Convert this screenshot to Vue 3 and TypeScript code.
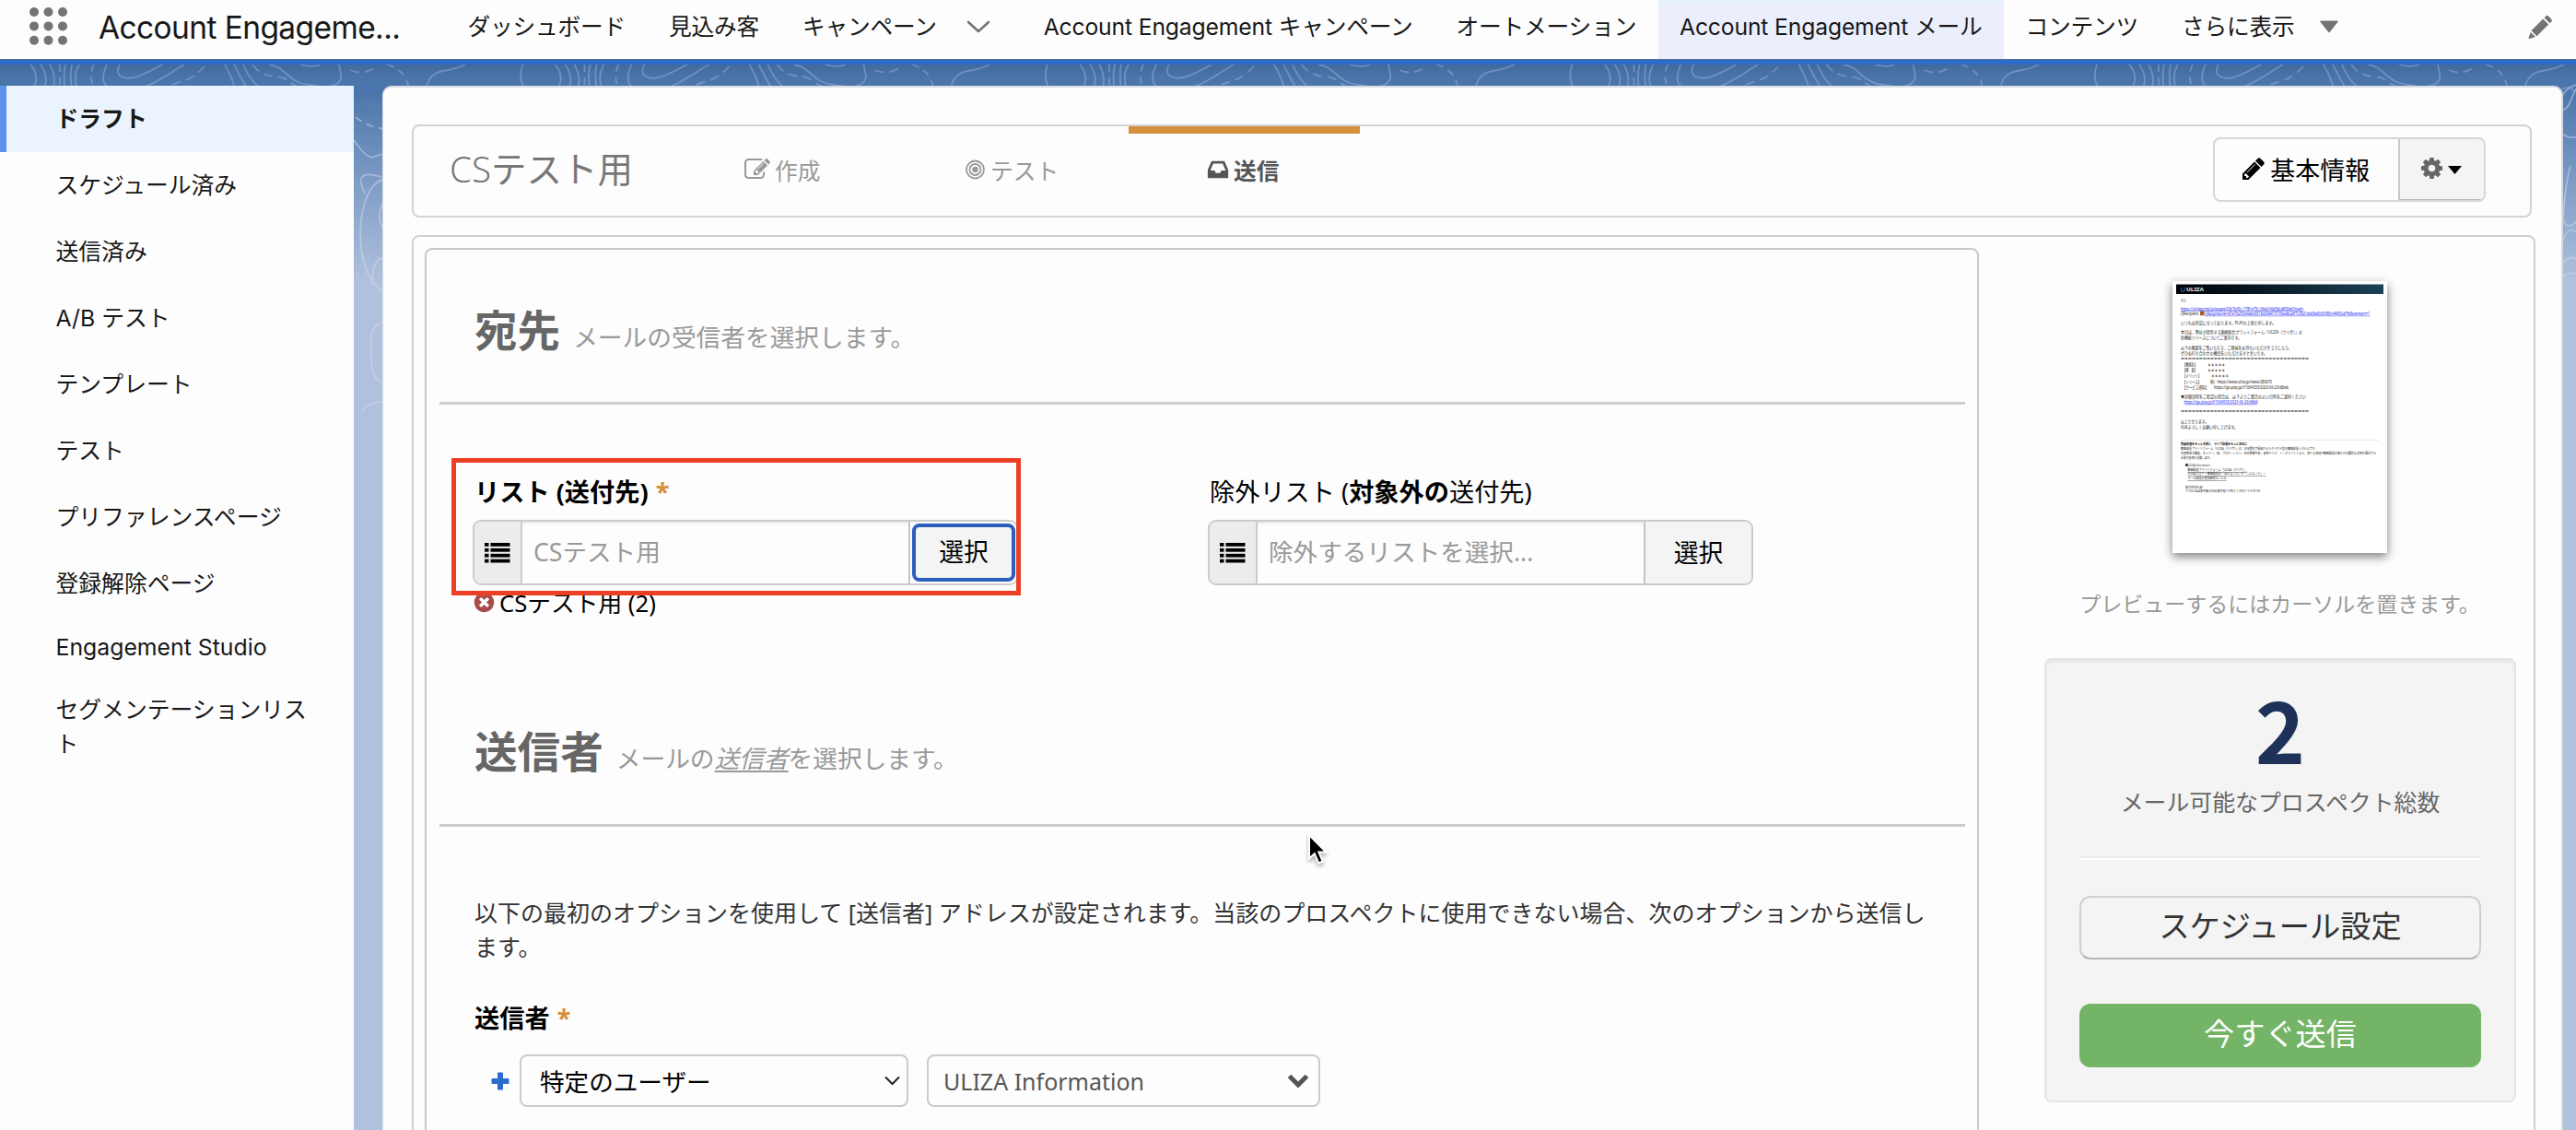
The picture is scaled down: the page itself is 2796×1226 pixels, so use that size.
<script setup lang="ts">
interface NavItem { label: string; active?: boolean; chevron?: boolean; more?: boolean }
interface MailLine { x: number; y: number; w: number; s: number; t: string; c?: string; b?: boolean; u?: boolean }

const navItems: NavItem[] = [
  { label: 'ダッシュボード' },
  { label: '見込み客' },
  { label: 'キャンペーン', chevron: true },
  { label: 'Account Engagement キャンペーン' },
  { label: 'オートメーション' },
  { label: 'Account Engagement メール', active: true },
  { label: 'コンテンツ' },
  { label: 'さらに表示', more: true },
]

const sideItems: string[] = [
  'ドラフト', 'スケジュール済み', '送信済み', 'A/B テスト', 'テンプレート', 'テスト',
  'プリファレンスページ', '登録解除ページ', 'Engagement Studio', 'セグメンテーションリスト',
]

const icons = {
  pencil: 'M491 1536l91-91-235-235-91 91v107h128v128h107zm523-928q0-22-22-22-10 0-17 7l-542 542q-7 7-7 17 0 22 22 22 10 0 17-7l542-542q7-7 7-17zm-54-192l416 416-832 832h-416v-416zm683 96q0 53-37 90l-166 166-416-416 166-165q36-38 90-38 53 0 91 38l235 234q37 39 37 91z',
  edit: 'M888 1184l116-116-152-152-116 116v56h96v96h56zm440-720q-16-16-33 1l-350 350q-17 17-1 33t33-1l350-350q17-17 1-33zm80 594v190q0 119-84.5 203.5t-203.5 84.5h-832q-119 0-203.5-84.5t-84.5-203.5v-832q0-119 84.5-203.5t203.5-84.5h832q63 0 117 25 15 7 18 23 3 17-9 29l-49 49q-14 14-32 8-23-6-45-6h-832q-66 0-113 47t-47 113v832q0 66 47 113t113 47h832q66 0 113-47t47-113v-126q0-13 9-22l64-64q15-15 35-7t20 29zm-96-738l288 288-672 672h-288v-288zm444 132l-92 92-288-288 92-92q28-28 68-28t68 28l152 152q28 28 28 68t-28 68z',
  inbox: 'M1151 960h316q-1-3-2.5-8t-2.5-8l-212-496h-708l-212 496q-1 2-2.5 8t-2.5 8h316l95 192h320zm513 30v482q0 26-19 45t-45 19h-1408q-26 0-45-19t-19-45v-482q0-62 25-123l238-552q10-25 36.5-42t52.5-17h832q26 0 52.5 17t36.5 42l238 552q25 61 25 123z',
  cog: 'M1152 896q0-106-75-181t-181-75-181 75-75 181 75 181 181 75 181-75 75-181zm512-109v222q0 12-8 23t-20 13l-185 28q-19 54-39 91 35 50 107 138 10 12 10 25t-9 23q-27 37-99 108t-94 71q-12 0-26-9l-138-108q-44 23-91 38-16 136-29 186-7 28-36 28h-222q-14 0-24.5-8.5t-11.5-21.5l-28-184q-49-16-90-37l-141 107q-10 9-25 9-14 0-25-11-126-114-165-168-7-10-7-23 0-12 8-23 15-21 51-66.5t54-70.5q-27-50-41-99l-183-27q-13-2-21-12.5t-8-23.5v-222q0-12 8-23t19-13l186-28q14-46 39-92-40-57-107-138-10-12-10-24 0-10 9-23 26-36 98.5-107.5t94.5-71.5q13 0 26 10l138 107q44-23 91-38 16-136 29-186 7-28 36-28h222q14 0 24.5 8.5t11.5 21.5l28 184q49 16 90 37l142-107q9-9 24-9 13 0 25 10 129 119 165 170 7 8 7 22 0 12-8 23-15 21-51 66.5t-54 70.5q26 50 41 98l183 28q13 2 21 12.5t8 23.5z',
  remove: 'M1277 1122q0-26-19-45l-181-181 181-181q19-19 19-45 0-27-19-46l-90-90q-19-19-46-19-26 0-45 19l-181 181-181-181q-19-19-45-19-27 0-46 19l-90 90q-19 19-19 46 0 26 19 45l181 181-181 181q-19 19-19 45 0 27 19 46l90 90q19 19 46 19 26 0 45-19l181-181 181 181q19 19 45 19 27 0 46-19l90-90q19-19 19-46zm387-226q0 209-103 385.5t-279.5 279.5-385.5 103-385.5-103-279.5-279.5-103-385.5 103-385.5 279.5-279.5 385.5-103 385.5 103 279.5 279.5 103 385.5z',
}

const link = '#2020ee'
const mail: MailLine[] = [
  { x: 9, y: 23, w: 6, s: 4, t: '各位', c: '#777' },
  { x: 9, y: 31.5, w: 133, s: 4.4, t: 'https://ulizaportal.jp/pages/00b7b65c-178f-e75c-36a9-06d5dcd838e6?mail=', c: link, u: true },
  { x: 9, y: 36.7, w: 20, s: 4.4, t: '{{Recipient.', c: '#222' },
  { x: 35, y: 36.7, w: 179, s: 4.4, t: '}}&signature=d1e7b250b4dec831bb09e01510bedb2ef7c3821da09a8c83380c44852d7fd&version=1', c: link, u: true },
  { x: 9, y: 47, w: 103, s: 4.8, t: 'いつもお世話になっております。PLAYの上原と申します。' },
  { x: 9, y: 57.3, w: 132, s: 4.8, t: '本日は、弊社が提供する動画配信プラットフォーム「ULIZA（ウリザ）」の' },
  { x: 9, y: 63.3, w: 66, s: 4.8, t: '新機能リリースについてご案内です。' },
  { x: 9, y: 73.8, w: 121, s: 4.8, t: '以下の概要をご覧いただき、ご興味をお持ちいただけそうでしたら、' },
  { x: 9, y: 79.6, w: 94, s: 4.8, t: 'ぜひお打ち合わせの機会をいただけますと幸いです。' },
  { x: 9, y: 86, w: 139, s: 4.4, t: '===================================' },
  { x: 11, y: 92.3, w: 16, s: 4.8, t: '【機能名】' },
  { x: 38, y: 92.3, w: 19, s: 4.8, t: '＊＊＊＊＊' },
  { x: 11, y: 98, w: 16, s: 4.8, t: '【概　要】' },
  { x: 38, y: 98, w: 19, s: 4.8, t: '＊＊＊＊＊' },
  { x: 11, y: 103.7, w: 20, s: 4.8, t: '【メリット】' },
  { x: 42, y: 103.7, w: 19, s: 4.8, t: '＊＊＊＊＊' },
  { x: 11, y: 110.7, w: 20, s: 4.8, t: '【リリース】' },
  { x: 41, y: 110.7, w: 67, s: 4.8, t: '例）https://www.uliza.jp/news/280670' },
  { x: 11, y: 116.5, w: 28, s: 4.8, t: '【サービス資料】' },
  { x: 45, y: 116.5, w: 81, s: 4.6, t: 'https://go.play.jp/l/1064333/2023-06-23/d8wb' },
  { x: 9, y: 127, w: 136, s: 4.8, t: '▼詳細説明をご希望の場合は、以下よりご都合のよい日時をご選択ください' },
  { x: 12.5, y: 132.7, w: 80, s: 4.6, t: 'https://go.play.jp/l/1064333/2023-06-23/d8d4', c: link, u: true },
  { x: 9, y: 143, w: 139, s: 4.4, t: '===================================' },
  { x: 9, y: 153.7, w: 30, s: 4.8, t: '以上となります。' },
  { x: 9, y: 159.5, w: 62, s: 4.8, t: '何卒よろしくお願い申し上げます。' },
  { x: 9, y: 178, w: 72, s: 3.9, t: '動画配信をもっと手軽に　ライブ配信をもっと身近に', b: true },
  { x: 9, y: 183, w: 148, s: 3.9, t: '動画配信プラットフォーム「ULIZA（ウリザ）」は、日本国内で開発されたクラウド型の動画配信システムです。' },
  { x: 9, y: 187.8, w: 212, s: 3.9, t: '学習塾株式講座、セミナー、株、プロモーション、社内情報共有、音楽ライブ、トークイベントなど、様々な用途や動画配信の導入や効果的な活用を検討する' },
  { x: 9, y: 192.6, w: 34, s: 3.9, t: '企業の皆様を支援します。' },
  { x: 14, y: 201.3, w: 27, s: 3.9, t: '■ULIZA Information' },
  { x: 16.5, y: 206, w: 64, s: 3.9, t: '動画配信プラットフォーム「ULIZA（ウリザ）」', u: true },
  { x: 16.5, y: 210, w: 85, s: 3.9, t: 'ULIZAブログ ー動画配信の「ほんなこと」や「こんなこと」ー', u: true },
  { x: 16.5, y: 215, w: 42, s: 3.9, t: 'メール配信の登録解除はこちら', u: true },
  { x: 14, y: 224.5, w: 19, s: 3.9, t: '株式会社PLAY' },
  { x: 14, y: 228.5, w: 81, s: 3.9, t: '〒150-0044東京都渋谷区道玄坂1丁目21-1 渋谷ソラスタ15F' },
]
</script>

<template>
  <div class="app">
    <header class="top">
      <svg class="waffle" width="42" height="42" viewBox="0 0 42 42">
        <template v-for="r in 3" :key="r">
          <circle v-for="c in 3" :key="c" :cx="5 + (c - 1) * 15.5" :cy="5 + (r - 1) * 15.4" r="5" fill="#747474" />
        </template>
      </svg>
      <div class="app-name">Account Engageme...</div>
      <nav class="nav">
        <div v-for="n in navItems" :key="n.label" class="nav-item" :class="{ active: n.active }">
          <span>{{ n.label }}</span>
          <svg v-if="n.chevron" class="chev" width="26" height="14" viewBox="0 0 26 14"><path d="M2 2l11 10L24 2" fill="none" stroke="#747474" stroke-width="2.6" stroke-linecap="round" stroke-linejoin="round" /></svg>
          <svg v-if="n.more" class="tri" width="20" height="14" viewBox="0 0 20 14"><path d="M1 .5h18a.8.8 0 0 1 .6 1.3L10.6 13a.8.8 0 0 1-1.2 0L.4 1.8A.8.8 0 0 1 1 .5z" fill="#747474" /></svg>
        </div>
      </nav>
      <svg class="top-pencil" width="27" height="27" viewBox="0 0 27 27" fill="#747474"><path d="M3.500 17.300L16.200 4.600l6 6L9.500 23.300zM17.600 3.200l1.700-1.700a2 2 0 0 1 2.800 0l3.200 3.200a2 2 0 0 1 0 2.800l-1.700 1.700zM2.800 19l5.200 5.100-6.500 1.900a.7.7 0 0 1-.9-.9z" /></svg>
    </header>

    <main class="stage">
      <svg class="contours" width="2796" height="420" viewBox="0 0 2796 420" fill="none">
        <g v-for="k in 5" :key="k" :transform="`translate(${(k - 1) * 569.5} 0)`" stroke="#a8c3e6" stroke-opacity=".4" stroke-width="1.8">
          <path d="M-2 0Q-8 16 2 29M33 0q12 14 1 29M44 0q10 14 3 29M54 0q8 14 3 29M71 0q-3 14 0 29M78 0q-3 14 1 29M86 0q-8 14-1 29" />
          <path d="M65 0v29M102 0q-8 15 3 29M420 0q22 6 24 29" stroke-dasharray="8 6" />
          <path d="M116 0c-10 22 0 28 20 28c24 0 40-14 64-28M130 0c-8 14 8 18 22 12q14-6 24-12M244 0q8 14 12 29M254 0q8 16 16 29M264 0q10 24 26 29M292 0c18 2 20 20 44 22c26 6 36-2 34-12l-2-10M326 0q14 4 22 0M461 29c4-14 8-20 20-22q14-2 24-7M500 29c6-5 16-6 14 0" />
          <path d="M172 29q14-8 26-11t24-16M274 0c6 8 12 12 26 13s14 10 30 13M380 6c14 6 22 0 30-4" stroke-dasharray="10 6" />
        </g>
        <g stroke="#d3d9f2" stroke-opacity=".5" stroke-width="1.8">
          <path d="M386 57q12 10 30 13" stroke-dasharray="8 6" />
          <path d="M384 82q15 22 22 18l10-3M416 125c-30 6-36 100 0 122M396 140c-10-20-2-24 18-18M416 150q-8 16 0 28M416 210c-8 0-12 10-12 30M416 280q-16 2-13 30v8q0 24 13 28M416 366q-16 0-24 10" />
          <path d="M2796 22q-14 4-20 22 6 10 12 0l8-18M2782 76q6 4 14 3M2790 110q-6 20-8 60 6 10 14 0M2782 190q6-16 14-8M2782 215q8-8 14-4M2782 230q8-6 14-2" />
        </g>
      </svg>

      <aside class="side">
        <div v-for="(s, i) in sideItems" :key="s" class="side-item" :class="{ current: i === 0, latin: i === 8 }">{{ s }}</div>
      </aside>

      <section class="panel">
        <div class="steps">
          <div class="mail-name">CS<span>テスト用</span></div>
          <div class="step s1"><svg width="28" height="28" viewBox="0 0 1792 1792" fill="currentColor"><path :d="icons.edit" /></svg>作成</div>
          <div class="step s2">
            <svg width="21" height="22" viewBox="0 0 21 22" fill="none" stroke="currentColor"><circle cx="10.500" cy="11" r="9.500" stroke-width="1.800" /><circle cx="10.500" cy="11" r="6" stroke-width="1.800" /><circle cx="10.500" cy="11" r="3.200" fill="currentColor" stroke="none" /></svg>テスト
          </div>
          <div class="step s3"><svg width="26" height="26" viewBox="0 0 1792 1792" fill="currentColor"><path :d="icons.inbox" /></svg>送信</div>
          <div class="tools">
            <div class="tool"><svg width="28" height="28" viewBox="0 0 1792 1792"><path :d="icons.pencil" /></svg>基本情報</div>
            <div class="tool gear">
              <svg width="27" height="27" viewBox="0 0 1792 1792" fill="#666"><path :d="icons.cog" /></svg>
              <svg class="caret" width="15" height="9" viewBox="0 0 15 9"><path d="M0 0h15L7.500 9z" /></svg>
            </div>
          </div>
        </div>

        <div class="board">
          <div class="form">
            <div class="sec-head"><h2>宛先</h2><p>メールの受信者を選択します。</p></div>
            <div class="lists">
              <div class="field">
                <div class="label bold">リスト (送付先) <i class="req">*</i></div>
                <div class="group">
                  <div class="addon"><svg width="28" height="22" viewBox="0 0 28 22"><g v-for="r in 4" :key="r"><rect x="0" :y="(r - 1) * 5.9" width="4.500" height="3.800" /><rect x="6.500" :y="(r - 1) * 5.9" width="21" height="3.800" /></g></svg></div>
                  <div class="input">CSテスト用</div>
                  <div class="pick focus"><span>選択</span></div>
                </div>
                <div class="tag"><svg width="25" height="25" viewBox="0 0 1792 1792" fill="#a94c4a"><path :d="icons.remove" /></svg>CSテスト用 (2)</div>
                <div class="mark"></div>
              </div>
              <div class="field">
                <div class="label">除外リスト (<b>対象外の</b>送付先)</div>
                <div class="group">
                  <div class="addon"><svg width="28" height="22" viewBox="0 0 28 22"><g v-for="r in 4" :key="r"><rect x="0" :y="(r - 1) * 5.9" width="4.500" height="3.800" /><rect x="6.500" :y="(r - 1) * 5.9" width="21" height="3.800" /></g></svg></div>
                  <div class="input">除外するリストを選択...</div>
                  <div class="pick"><span>選択</span></div>
                </div>
              </div>
            </div>

            <div class="sec-head second"><h2>送信者</h2><p>メールの<em>送信者</em>を選択します。</p></div>
            <div class="sender">
              <p class="desc">以下の最初のオプションを使用して [送信者] アドレスが設定されます。当該のプロスペクトに使用できない場合、次のオプションから送信し<br>ます。</p>
              <div class="label bold">送信者 <i class="req">*</i></div>
              <div class="row">
                <svg class="plus" width="20" height="20" viewBox="0 0 20 20"><path d="M7.500 1h5v6.500H19v5h-6.500V19h-5v-6.500H1v-5h6.500z" fill="#2b6bcb" stroke="#2b6bcb" stroke-linejoin="round" /></svg>
                <div class="select a">特定のユーザー<svg width="17" height="11" viewBox="0 0 17 11"><path d="M1 1.500l7.500 7.500L16 1.500" fill="none" stroke="#222" stroke-width="2" /></svg></div>
                <div class="select b">ULIZA Information<svg width="24" height="16" viewBox="0 0 24 16"><path d="M2.500 2.500L12 12l9.500-9.500" fill="none" stroke="#555" stroke-width="5" /></svg></div>
              </div>
            </div>

            <svg class="cursor" width="26" height="38" viewBox="0 0 26 38"><path d="M4 3v25.500l5.800-5.300 4.400 10.200 4.500-1.900-4.300-9.900h8z" stroke="#fff" stroke-width="2" /></svg>
          </div>

          <div class="rail">
            <svg class="thumb" width="233" height="295" viewBox="0 0 233 295" font-family="'Noto Sans','Noto Sans CJK JP',sans-serif">
              <defs>
                <linearGradient id="bar" x1="0" y1="0" x2="1" y2="0"><stop offset="0" stop-color="#020408" /><stop offset=".3" stop-color="#05121c" /><stop offset="1" stop-color="#1c4257" /></linearGradient>
              </defs>
              <rect width="233" height="295" fill="#fff" />
              <rect x="4" y="3.500" width="225" height="10.500" fill="url(#bar)" />
              <path d="M9.500 7v2.500a1.800 1.800 0 0 0 3.600 0V6.500" fill="none" stroke="#2a5a8c" stroke-width="1.200" />
              <text x="15" y="11" font-size="5" font-weight="700" fill="#e8eef2" textLength="19" lengthAdjust="spacingAndGlyphs">ULIZA</text>
              <rect x="30" y="32.700" width="4.500" height="4.500" fill="#a85a28" />
              <rect x="9" y="172" width="215" height=".7" fill="#ddd" />
              <text v-for="(m, i) in mail" :key="i" :x="m.x" :y="m.y" :font-size="m.s" :fill="m.c ?? '#222'" :font-weight="m.b ? 700 : 400" :text-decoration="m.u ? 'underline' : 'none'" :textLength="m.w" lengthAdjust="spacingAndGlyphs">{{ m.t }}</text>
            </svg>
            <p class="hint">プレビューするにはカーソルを置きます。</p>
            <div class="summary">
              <div class="count">2</div>
              <div class="count-label">メール可能なプロスペクト総数</div>
              <div class="rule"></div>
              <div class="btn">スケジュール設定</div>
              <div class="btn green">今すぐ送信</div>
            </div>
          </div>
        </div>
      </section>
    </main>
  </div>
</template>

<style>
body { margin: 0; overflow: hidden; }
</style>

<style scoped>
.app {
  width: 2796px;
  height: 1226px;
  overflow: hidden;
  font-family: "Noto Sans", "Noto Sans CJK JP", sans-serif;
  color: #000;
  white-space: nowrap;
}
.app * { box-sizing: border-box; }
p, h2 { margin: 0; }

.top {
  height: 70px;
  display: flex;
  background: linear-gradient(#fdfdfd 64px, #566f93 64px, #566f93 65px, #2b6ccb 65px);
  font-family: Inter, "Noto Sans CJK JP", sans-serif;
  color: #181818;
}
.waffle { margin: 8px 0 0 32px; }
.app-name { margin-left: 33px; width: 377px; font-size: 33.5px; line-height: 60px; letter-spacing: -.6px; }
.nav { display: flex; }
.nav-item { height: 64px; padding: 0 23.4px; font-size: 24.7px; letter-spacing: -.15px; line-height: 58px; display: flex; }
.nav-item.active { background: #ebeefb; box-shadow: inset 0 2px #e4f1fb; }
.chev { margin: 22px 11px 0 32px; }
.tri { margin: 22px 0 0 27px; }
.top-pencil { margin: 16px 25px 0 auto; }

.stage {
  position: relative;
  height: 1156px;
  display: flex;
  padding-top: 23px;
  background: linear-gradient(#42699e 0, #4a75aa 14px, #4b76ab 30px, #7f9dc6 130px, #b0c1dd 235px);
}
.contours { position: absolute; left: 0; top: 0; }
.side {
  position: relative;
  width: 384px;
  background: #fdfdfd;
  font-family: Inter, "Noto Sans CJK JP", sans-serif;
  font-size: 24.8px;
  color: #181818;
}
.side-item { padding: 17.5px 40px 17.5px 60.5px; line-height: 37px; white-space: normal; }
.side-item.current { background: #ebf4fe; font-weight: 600; box-shadow: inset 7px 0 #5b93ee; }
.side-item.latin { line-height: 30px; }

.panel {
  position: relative;
  margin-left: 31px;
  width: 2367px;
  padding: 40px 29px 0 31px;
  background: #fdfdfd;
  border-left: 1px solid #d5dae2;
  border-right: 2px solid #d5d8dc;
  border-top: 2px solid #d8dde4;
  border-radius: 10px 10px 0 0;
}
.steps {
  position: relative;
  width: 2301px;
  height: 101px;
  border: 2px solid #d3d3d3;
  border-radius: 8px;
  display: flex;
  align-items: flex-start;
  padding-left: 39px;
}
.mail-name { width: 320px; font-size: 38.5px; line-height: 93px; font-weight: 300; color: #777; }
.mail-name span { font-weight: 400; }
.step { display: flex; align-items: center; font-size: 24.7px; color: #999; height: 97px; padding-bottom: 4px; }
.s1 { width: 240px; gap: 5px; }
.s2 { width: 177px; gap: 6px; }
.s3 { width: 251px; padding-left: 84px; gap: 4px; color: #555; font-weight: 700; border-top: 8px solid #d68f3c; padding-bottom: 12px; }
.tools { margin: 12px 0 0 926px; display: flex; border: 2px solid #d6d6d6; border-radius: 8px; height: 70px; width: 296px; overflow: hidden; }
.tool { width: 200px; display: flex; align-items: center; justify-content: center; gap: 4px; font-size: 27px; padding: 0 2px 2px 0; }
.gear { width: 94px; background: #f4f4f4; border-left: 2px solid #c9c9c9; border-bottom: 1px solid #b8b8b8; }
.caret { margin-top: 4px; }

.board {
  margin-top: 19px;
  width: 2305px;
  height: 1100px;
  border: 2px solid #cfcfcf;
  border-radius: 8px;
  padding: 12px 0 0 12px;
  display: flex;
}
.form { position: relative; width: 1687px; border: 2px solid #c8c8c8; border-radius: 8px; padding: 0 13px 0 14px; }
.sec-head { height: 168px; border-bottom: 3px solid #cdcdcd; padding: 57px 0 0 38px; display: flex; }
.sec-head.second { padding-top: 56px; }
h2 { font-size: 46.6px; line-height: 60px; color: #666; font-weight: 700; }
.sec-head p { margin-left: 14px; font-size: 26.7px; line-height: 76px; color: #999; }
.sec-head em { text-decoration: underline; text-decoration-thickness: 2px; text-underline-offset: 3px; }
.lists { height: 290px; padding: 76px 0 0 36px; display: flex; gap: 206px; }
.field { position: relative; width: 592px; }
.label { font-size: 27.2px; line-height: 38px; padding-left: 2px; }
.label.bold, .label b { font-weight: 700; }
.req { font-style: normal; color: #d68f3c; margin-left: 1px; }
.group { margin-top: 11px; height: 71px; display: flex; border: 2px solid #cbcbcb; border-radius: 9px; background: #fdfdfd; }
.addon { width: 52px; background: #ececec; border-right: 2px solid #cbcbcb; border-radius: 7px 0 0 7px; display: flex; align-items: center; justify-content: center; }
.input { width: 421px; padding-left: 12px; font-size: 26.6px; line-height: 66px; color: #999; border-right: 2px solid #c4c4c4; box-shadow: inset 0 3px 3px -1px rgba(0, 0, 0, .08); }
.pick { flex: 1; display: flex; justify-content: center; align-items: center; font-size: 26.8px; background: #f4f4f4; border-radius: 0 7px 7px 0; padding-bottom: 2px; }
.pick.focus { background: #fdfdfd; padding: 0 1px 0 2px; }
.pick.focus span { width: 112px; height: 63px; line-height: 53px; text-align: center; background: #f4f4f4; border: 4px solid #2a5fbd; border-radius: 8px; }
.tag { display: flex; align-items: center; gap: 4px; height: 35px; font-size: 25.7px; }
.tag svg { margin-top: 2px; }
.mark { position: absolute; left: -23px; top: -18px; width: 618px; height: 149px; border: 5px solid #eb4026; }

.sender { padding: 75px 0 0 38px; }
.desc { font-size: 25px; line-height: 37px; color: #333; }
.sender .label { margin-top: 40px; padding-left: 0; }
.row { margin-top: 20px; display: flex; align-items: center; height: 57px; padding-left: 18px; }
.plus { margin-right: 11px; }
.select { height: 57px; border: 2px solid #cbcbcb; border-radius: 8px; display: flex; align-items: center; justify-content: space-between; }
.select.a { width: 422px; padding: 0 7px 1px 20px; font-size: 26.6px; }
.select.b { width: 427px; margin-left: 20px; padding: 0 10px 0 16px; font-size: 25px; color: #555; }
.cursor { position: absolute; left: 954px; top: 632px; filter: drop-shadow(0 3px 2px rgba(0, 0, 0, .3)); }

.rail { width: 512px; margin-left: 71px; padding-top: 36px; }
.thumb { display: block; overflow: visible; margin-left: 139px; box-shadow: 0 4px 10px rgba(0, 0, 0, .5); }
.hint { margin-top: 36px; text-align: center; font-size: 23px; line-height: 38px; color: #999; padding-right: 1px; }
.summary { margin-top: 40px; width: 512px; height: 482px; background: #f4f4f4; border: 2px solid #e3e3e3; border-radius: 8px; padding: 25px 36px 0; text-align: center; box-shadow: inset 0 3px 3px rgba(0, 0, 0, .05); }
.count { font-size: 92px; font-weight: 700; line-height: 96px; color: #1e3158; font-family: "Noto Sans CJK JP", sans-serif; }
.count-label { font-size: 24.9px; line-height: 38px; color: #666; margin-top: 14px; }
.rule { margin-top: 40px; height: 4px; background: #fff; border-top: 2px solid #ebebeb; }
.btn { margin-top: 39px; height: 69px; border: 2px solid #cfcfcf; border-bottom-color: #b5b5b5; border-radius: 12px; font-size: 33.2px; line-height: 62px; color: #333; }
.btn.green { margin-top: 48px; background: #74b466; border-color: #74b466; color: #fff; }
</style>
